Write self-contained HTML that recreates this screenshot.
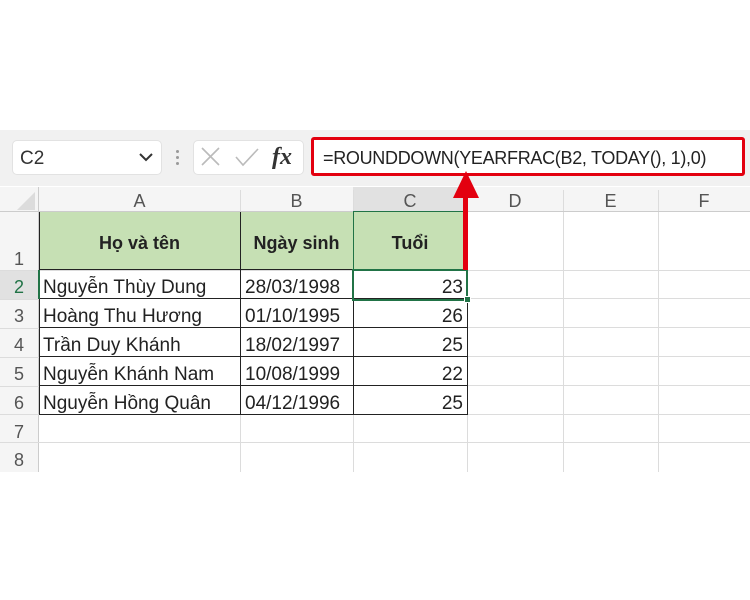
<!DOCTYPE html><html><head><style>
body{margin:0;width:750px;height:600px;background:#fff;position:relative;overflow:hidden;font-family:"Liberation Sans","DejaVu Sans",sans-serif}
.a{position:absolute}
.t{position:absolute;font-size:19px;color:#222;white-space:nowrap}
.hl{position:absolute;height:1px;background:#dcdcdc}
.vl{position:absolute;width:1px;background:#dcdcdc}
.ch{position:absolute;top:188px;height:25px;font-size:18px;color:#555;text-align:center;line-height:26px}
.rh{position:absolute;left:0;width:38px;font-size:18px;color:#555;text-align:center}
</style></head><body>
<div class="a" style="left:0;top:130px;width:750px;height:56px;background:#f1f1f1"></div>
<div class="a" style="left:12px;top:140px;width:148px;height:33px;background:#fff;border:1px solid #e2e2e2;border-radius:5px"></div>
<div class="t" style="left:20px;top:148px;color:#333">C2</div>
<svg class="a" style="left:137px;top:150px" width="18" height="14"><path d="M3 4 L9 10 L15 4" stroke="#333" stroke-width="2" fill="none"/></svg>
<div class="a" style="left:176px;top:150px;width:3px;height:3px;background:#999;border-radius:2px"></div>
<div class="a" style="left:176px;top:156px;width:3px;height:3px;background:#999;border-radius:2px"></div>
<div class="a" style="left:176px;top:162px;width:3px;height:3px;background:#999;border-radius:2px"></div>
<div class="a" style="left:193px;top:140px;width:109px;height:33px;background:#fff;border:1px solid #e2e2e2;border-radius:5px"></div>
<svg class="a" style="left:200px;top:146px" width="60" height="22"><path d="M2 2 L19 19 M19 2 L2 19" stroke="#bbb" stroke-width="1.6" fill="none"/><path d="M36 11 L43 19 L58 3" stroke="#bbb" stroke-width="1.6" fill="none"/></svg>
<div class="t" style="left:272px;top:144px;font-family:'Liberation Serif',serif;font-style:italic;font-size:24px;font-weight:bold;color:#333">fx</div>
<div class="a" style="left:311px;top:137px;width:428px;height:33px;background:#fff;border:3px solid #e3000f;border-radius:3px"></div>
<div class="t" style="left:323px;top:148px;font-size:18px;letter-spacing:-0.3px;color:#222">=ROUNDDOWN(YEARFRAC(B2, TODAY(), 1),0)</div>
<!-- headers -->
<div class="a" style="left:0;top:187px;width:750px;height:25px;background:#f5f5f5"></div>
<div class="a" style="left:0;top:187px;width:39px;height:285px;background:#f5f5f5"></div>
<svg class="a" style="left:16px;top:191px" width="20" height="20"><path d="M19 1 L19 19 L1 19 Z" fill="#dcdcdc"/></svg>
<div class="a" style="left:353px;top:187px;width:114px;height:25px;background:#e1e1e1"></div>
<div class="a" style="left:0;top:270px;width:39px;height:29px;background:#e1e1e1"></div>
<div class="ch" style="left:39px;width:201px">A</div>
<div class="ch" style="left:240px;width:113px">B</div>
<div class="ch" style="left:353px;width:114px;color:#555">C</div>
<div class="ch" style="left:467px;width:96px">D</div>
<div class="ch" style="left:563px;width:95px">E</div>
<div class="ch" style="left:658px;width:92px">F</div>
<div class="vl" style="left:240px;top:190px;height:22px"></div><div class="vl" style="left:353px;top:190px;height:22px"></div><div class="vl" style="left:467px;top:190px;height:22px"></div><div class="vl" style="left:563px;top:190px;height:282px"></div><div class="vl" style="left:658px;top:190px;height:282px"></div>
<div class="vl" style="left:467px;top:212px;height:260px"></div><div class="vl" style="left:240px;top:415px;height:57px"></div><div class="vl" style="left:353px;top:415px;height:57px"></div>
<div class="vl" style="left:38px;top:187px;height:285px;background:#ccc"></div>
<div class="hl" style="left:0;top:211px;width:750px;background:#ccc"></div>
<div class="hl" style="left:39px;top:298px;width:711px"></div><div class="hl" style="left:39px;top:327px;width:711px"></div><div class="hl" style="left:39px;top:356px;width:711px"></div><div class="hl" style="left:39px;top:385px;width:711px"></div><div class="hl" style="left:0;top:414px;width:750px"></div><div class="hl" style="left:0;top:442px;width:750px"></div><div class="hl" style="left:0;top:270px;width:750px"></div><div class="hl" style="left:0;top:299px;width:39px"></div><div class="hl" style="left:0;top:328px;width:39px"></div><div class="hl" style="left:0;top:357px;width:39px"></div><div class="hl" style="left:0;top:386px;width:39px"></div>
<!-- row numbers -->
<div class="rh" style="top:249px">1</div><div class="rh" style="top:277px;color:#217346">2</div><div class="rh" style="top:306px">3</div><div class="rh" style="top:335px">4</div><div class="rh" style="top:364px">5</div><div class="rh" style="top:393px">6</div><div class="rh" style="top:422px">7</div><div class="rh" style="top:450px">8</div>
<!-- table -->
<div class="a" style="left:39px;top:212px;width:428px;height:58px;background:#c6e0b4"></div>
<div class="a" style="left:39px;top:212px;width:427px;height:202px;border:1px solid #222;border-top:none;box-sizing:content-box"></div>
<div class="a" style="left:240px;top:212px;width:1px;height:203px;background:#222"></div>
<div class="a" style="left:353px;top:212px;width:1px;height:203px;background:#222"></div>
<div class="a" style="left:39px;top:269px;width:428px;height:1px;background:#222"></div>
<div class="a" style="left:39px;top:298px;width:428px;height:1px;background:#222"></div>
<div class="a" style="left:39px;top:327px;width:428px;height:1px;background:#222"></div>
<div class="a" style="left:39px;top:356px;width:428px;height:1px;background:#222"></div>
<div class="a" style="left:39px;top:385px;width:428px;height:1px;background:#222"></div>
<div class="t" style="left:39px;width:201px;text-align:center;top:233px;font-weight:bold;font-size:18px">Họ và tên</div>
<div class="t" style="left:240px;width:113px;text-align:center;top:233px;font-weight:bold;font-size:18px">Ngày sinh</div>
<div class="t" style="left:353px;width:114px;text-align:center;top:233px;font-weight:bold;font-size:18px">Tuổi</div>
<div class="t" style="left:43px;top:277px">Nguyễn Thùy Dung</div><div class="t" style="left:245px;top:277px">28/03/1998</div><div class="t" style="left:353px;width:110px;text-align:right;top:277px">23</div>
<div class="t" style="left:43px;top:306px">Hoàng Thu Hương</div><div class="t" style="left:245px;top:306px">01/10/1995</div><div class="t" style="left:353px;width:110px;text-align:right;top:306px">26</div>
<div class="t" style="left:43px;top:335px">Trần Duy Khánh</div><div class="t" style="left:245px;top:335px">18/02/1997</div><div class="t" style="left:353px;width:110px;text-align:right;top:335px">25</div>
<div class="t" style="left:43px;top:364px">Nguyễn Khánh Nam</div><div class="t" style="left:245px;top:364px">10/08/1999</div><div class="t" style="left:353px;width:110px;text-align:right;top:364px">22</div>
<div class="t" style="left:43px;top:393px">Nguyễn Hồng Quân</div><div class="t" style="left:245px;top:393px">04/12/1996</div><div class="t" style="left:353px;width:110px;text-align:right;top:393px">25</div>
<!-- selection -->
<div class="a" style="left:353px;top:211px;width:112px;height:57px;border:1px solid #217346"></div>
<div class="a" style="top:269px;width:112px;height:28px;border:2px solid #217346;box-sizing:content-box;left:352px"></div>
<div class="a" style="left:464px;top:296px;width:5px;height:5px;background:#217346;border:1px solid #fff"></div>
<div class="a" style="left:38px;top:270px;width:2px;height:29px;background:#217346"></div>
<!-- arrow -->
<div class="a" style="left:463px;top:195px;width:5px;height:75px;background:#e3000f"></div>
<svg class="a" style="left:451px;top:170px" width="30" height="30"><path d="M15 1 L28 28 L2 28 Z" fill="#e3000f"/></svg>
</body></html>
